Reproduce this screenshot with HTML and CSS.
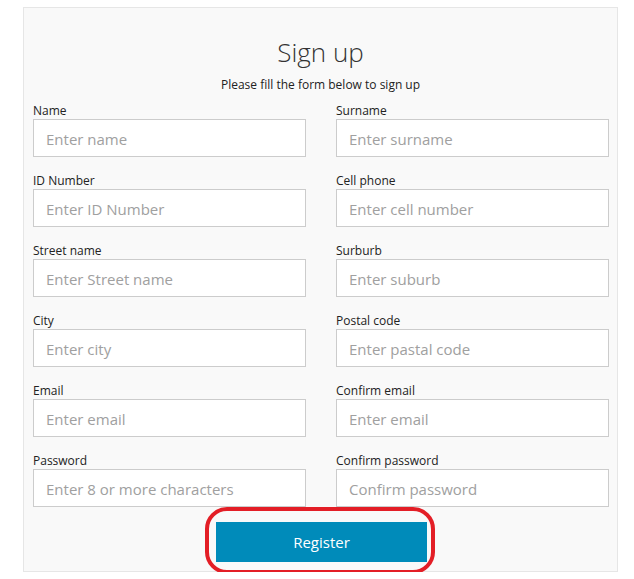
FILE: index.html
```html
<!DOCTYPE html>
<html>
<head>
<meta charset="utf-8">
<link rel="stylesheet" href="styles.css">
</head>
<body>
<div class="panel">
  <h1 class="title">Sign up</h1>
  <p class="subtitle">Please fill the form below to sign up</p>
  <form class="grid">
    <div class="field"><label>Name</label><input type="text" placeholder="Enter name"></div>
    <div class="field"><label>Surname</label><input type="text" placeholder="Enter surname"></div>
    <div class="field"><label>ID Number</label><input type="text" placeholder="Enter ID Number"></div>
    <div class="field"><label>Cell phone</label><input type="text" placeholder="Enter cell number"></div>
    <div class="field"><label>Street name</label><input type="text" placeholder="Enter Street name"></div>
    <div class="field"><label>Surburb</label><input type="text" placeholder="Enter suburb"></div>
    <div class="field"><label>City</label><input type="text" placeholder="Enter city"></div>
    <div class="field"><label>Postal code</label><input type="text" placeholder="Enter pastal code"></div>
    <div class="field"><label>Email</label><input type="text" placeholder="Enter email"></div>
    <div class="field"><label>Confirm email</label><input type="text" placeholder="Enter email"></div>
    <div class="field"><label>Password</label><input type="text" placeholder="Enter 8 or more characters"></div>
    <div class="field"><label>Confirm password</label><input type="text" placeholder="Confirm password"></div>
  </form>
  <div class="actions">
    <button class="register" type="button">Register</button>
  </div>
</div>
</body>
</html>
```
FILE: styles.css
```css
html, body {
  margin: 0;
  padding: 0;
  background: #ffffff;
}
body {
  font-family: "Open Sans", "Noto Sans", sans-serif;
  color: #222;
}
.panel {
  box-sizing: border-box;
  margin: 7px 0 0 23px;
  width: 595px;
  height: 565px;
  background: #f9f9f9;
  border: 1px solid #e6e6e6;
  padding: 27px 9px 0 9px;
}
.title {
  margin: 0;
  text-align: center;
  font-weight: 300;
  font-size: 26px;
  line-height: 34px;
  color: #333;
}
.subtitle {
  margin: 8px 0 0 0;
  text-align: center;
  font-size: 12px;
  line-height: 16px;
  color: #222;
}
.grid {
  margin: 10px 0 0 0;
  display: grid;
  grid-template-columns: 273px 273px;
  column-gap: 30px;
  row-gap: 16px;
}
.field {
  display: flex;
  flex-direction: column;
}
.field label {
  font-size: 12px;
  line-height: 16px;
  color: #222;
}
.field input {
  box-sizing: border-box;
  height: 38px;
  width: 273px;
  margin: 0;
  border: 1px solid #cccccc;
  background: #fff;
  padding: 2px 12px 0 12px;
  font-family: "Open Sans", "Noto Sans", sans-serif;
  font-size: 15px;
  color: #333;
  outline: none;
}
.field input::placeholder {
  color: #a0a0a0;
}
.actions {
  display: flex;
  justify-content: center;
  margin-top: 15px;
}
.register {
  position: relative;
  box-sizing: border-box;
  width: 211px;
  height: 40px;
  background: #008bba;
  border: none;
  color: #fff;
  font-family: "Open Sans", "Noto Sans", sans-serif;
  font-size: 15px;
  margin-left: 2px;
}
.register::after {
  content: "";
  position: absolute;
  left: -11px;
  right: -8px;
  top: -15px;
  bottom: -12px;
  border: 4px solid #e31e26;
  border-radius: 22px;
}
```
